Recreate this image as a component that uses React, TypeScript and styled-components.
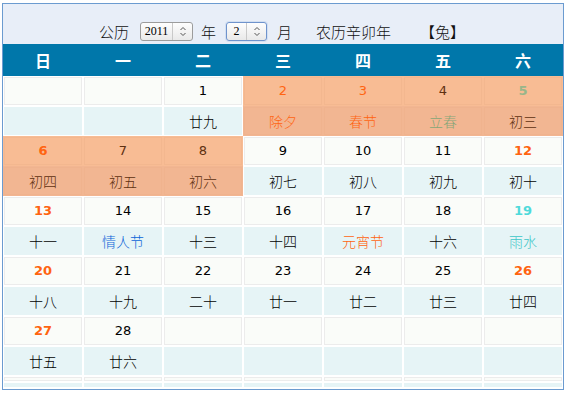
import React from 'react';
import styled, { createGlobalStyle } from 'styled-components';

const Global = createGlobalStyle`
  html, body { margin: 0; padding: 0; background: #ffffff; }
  body { font-family: "Noto Sans CJK SC", sans-serif; }
`;

const Frame = styled.div`
  box-sizing: border-box;
  width: 562px;
  margin: 3px 0 0 2px;
  border: 1px solid #6b9bd0;
  background: #ffffff;
`;

const TopBar = styled.div`
  box-sizing: border-box;
  height: 40px;
  padding: 18px 0 0 96px;
  background: #e8eef8;
  display: flex;
  justify-content: flex-start;
  align-items: flex-start;
  font: 300 15px/19px "Noto Sans CJK SC", sans-serif;
  color: #111;
`;

const Label = styled.span<{ $ml?: number; $mr?: number }>`
  height: 19px;
  margin-left: ${(p) => p.$ml ?? 0}px;
  margin-right: ${(p) => p.$mr ?? 0}px;
  white-space: nowrap;
`;

const SelectBox = styled.div<{ $w: number; $focus?: boolean }>`
  box-sizing: border-box;
  width: ${(p) => p.$w}px;
  height: 19px;
  display: inline-flex;
  align-items: stretch;
  border: 1px solid ${(p) => (p.$focus ? '#6f93cc' : '#9c9c9c')};
  border-radius: 3px;
  background: linear-gradient(#fefefe, #e9e9e9);
  box-shadow: ${(p) => (p.$focus ? '0 0 0 1px #d3e0f2' : 'none')};
`;

const SelectValue = styled.span`
  flex: 1;
  display: flex;
  align-items: center;
  justify-content: center;
  font: 12px/17px "Liberation Serif", serif;
  color: #000;
  border-right: 1px solid #c9c9c9;
`;

const SelectArrow = styled.span`
  width: 19px;
  display: flex;
  align-items: center;
  justify-content: center;
`;

const WeekHead = styled.div`
  display: grid;
  grid-template-columns: repeat(7, 80px);
  height: 32px;
  background: #0077aa;
`;

const WeekDay = styled.div`
  color: #ffffff;
  font: bold 16px/32px "Noto Sans CJK SC", sans-serif;
  text-align: center;
`;

const Grid = styled.div`
  display: grid;
  grid-template-columns: repeat(7, 80px);
  padding-bottom: 1px;
  background: #ffffff;
`;

const Cell = styled.div<{ $hl?: boolean; $lunar?: boolean; $short?: boolean }>`
  box-sizing: border-box;
  height: ${(p) => (p.$short ? 6 : 30)}px;
  padding: 1px;
  background: ${(p) => (p.$hl ? (p.$lunar ? '#f2b692' : '#f8bc94') : '#ffffff')};
`;

const Inner = styled.div<{ $hl?: boolean; $lunar?: boolean }>`
  box-sizing: border-box;
  height: 100%;
  display: flex;
  align-items: center;
  justify-content: center;
  border: 1px solid
    ${(p) => (p.$hl ? (p.$lunar ? '#f0b38e' : '#f3b78f') : p.$lunar ? '#e6f4f6' : '#ececec')};
  background: ${(p) => (p.$hl ? (p.$lunar ? '#f2b692' : '#f8bc94') : p.$lunar ? '#e6f4f6' : '#fafcf9')};
`;

const DateNum = styled.span<{ $color?: string; $bold?: boolean }>`
  font: ${(p) => (p.$bold ? 'bold ' : '')}13px/16px "DejaVu Sans", sans-serif;
  color: ${(p) => p.$color ?? '#000000'};
`;

const Lunar = styled.span<{ $color?: string }>`
  font: 300 14px/18px "Noto Sans CJK SC", sans-serif;
  color: ${(p) => p.$color ?? '#000000'};
`;

const Arrows = () => (
  <svg width="8" height="11" viewBox="0 0 8 11">
    <path d="M1.5 4 L4 1.5 L6.5 4" fill="none" stroke="#555" strokeWidth="1" />
    <path d="M1.5 7 L4 9.5 L6.5 7" fill="none" stroke="#555" strokeWidth="1" />
  </svg>
);

type Day = {
  d?: number;
  l?: string;
  dc?: string;
  bold?: boolean;
  lc?: string;
  hl?: boolean;
};

const ORANGE = '#ff6411';
const BROWN = '#5e3010';

const weeks: Day[][] = [
  [
    {},
    {},
    { d: 1, l: '廿九' },
    { d: 2, l: '除夕', dc: ORANGE, lc: ORANGE, hl: true },
    { d: 3, l: '春节', dc: ORANGE, lc: ORANGE, hl: true },
    { d: 4, l: '立春', dc: BROWN, lc: '#86a678', hl: true },
    { d: 5, l: '初三', dc: '#98b68a', bold: true, lc: BROWN, hl: true },
  ],
  [
    { d: 6, l: '初四', dc: ORANGE, bold: true, lc: BROWN, hl: true },
    { d: 7, l: '初五', dc: BROWN, lc: BROWN, hl: true },
    { d: 8, l: '初六', dc: BROWN, lc: BROWN, hl: true },
    { d: 9, l: '初七' },
    { d: 10, l: '初八' },
    { d: 11, l: '初九' },
    { d: 12, l: '初十', dc: ORANGE, bold: true },
  ],
  [
    { d: 13, l: '十一', dc: ORANGE, bold: true },
    { d: 14, l: '情人节', lc: '#0a64d8' },
    { d: 15, l: '十三' },
    { d: 16, l: '十四' },
    { d: 17, l: '元宵节', lc: ORANGE },
    { d: 18, l: '十六' },
    { d: 19, l: '雨水', dc: '#4fdadb', bold: true, lc: '#3cc6c8' },
  ],
  [
    { d: 20, l: '十八', dc: ORANGE, bold: true },
    { d: 21, l: '十九' },
    { d: 22, l: '二十' },
    { d: 23, l: '廿一' },
    { d: 24, l: '廿二' },
    { d: 25, l: '廿三' },
    { d: 26, l: '廿四', dc: ORANGE, bold: true },
  ],
  [
    { d: 27, l: '廿五', dc: ORANGE, bold: true },
    { d: 28, l: '廿六' },
    {},
    {},
    {},
    {},
    {},
  ],
];

const weekDays = ['日', '一', '二', '三', '四', '五', '六'];

export default function App() {
  return (
    <>
      <Global />
      <Frame>
        <TopBar>
          <Label $mr={11}>公历</Label>
          <SelectBox $w={53}>
            <SelectValue>2011</SelectValue>
            <SelectArrow>
              <Arrows />
            </SelectArrow>
          </SelectBox>
          <Label $ml={8} $mr={10}>年</Label>
          <SelectBox $w={41} $focus>
            <SelectValue>2</SelectValue>
            <SelectArrow>
              <Arrows />
            </SelectArrow>
          </SelectBox>
          <Label $ml={10} $mr={24}>月</Label>
          <Label $mr={29}>农历辛卯年</Label>
          <Label>【兔】</Label>
        </TopBar>
        <WeekHead>
          {weekDays.map((w) => (
            <WeekDay key={w}>{w}</WeekDay>
          ))}
        </WeekHead>
        <Grid>
          {weeks.map((week, wi) => (
            <React.Fragment key={wi}>
              {week.map((day, di) => (
                <Cell key={`d${di}`} $hl={day.hl}>
                  <Inner $hl={day.hl}>
                    {day.d !== undefined && (
                      <DateNum $color={day.dc} $bold={day.bold}>
                        {day.d}
                      </DateNum>
                    )}
                  </Inner>
                </Cell>
              ))}
              {week.map((day, di) => (
                <Cell key={`l${di}`} $hl={day.hl} $lunar>
                  <Inner $hl={day.hl} $lunar>
                    {day.l && <Lunar $color={day.lc}>{day.l}</Lunar>}
                  </Inner>
                </Cell>
              ))}
            </React.Fragment>
          ))}
          {weekDays.map((w) => (
            <Cell key={`s${w}`} $short>
              <Inner />
            </Cell>
          ))}
          {weekDays.map((w) => (
            <Cell key={`t${w}`} $short $lunar>
              <Inner $lunar />
            </Cell>
          ))}
        </Grid>
      </Frame>
    </>
  );
}
